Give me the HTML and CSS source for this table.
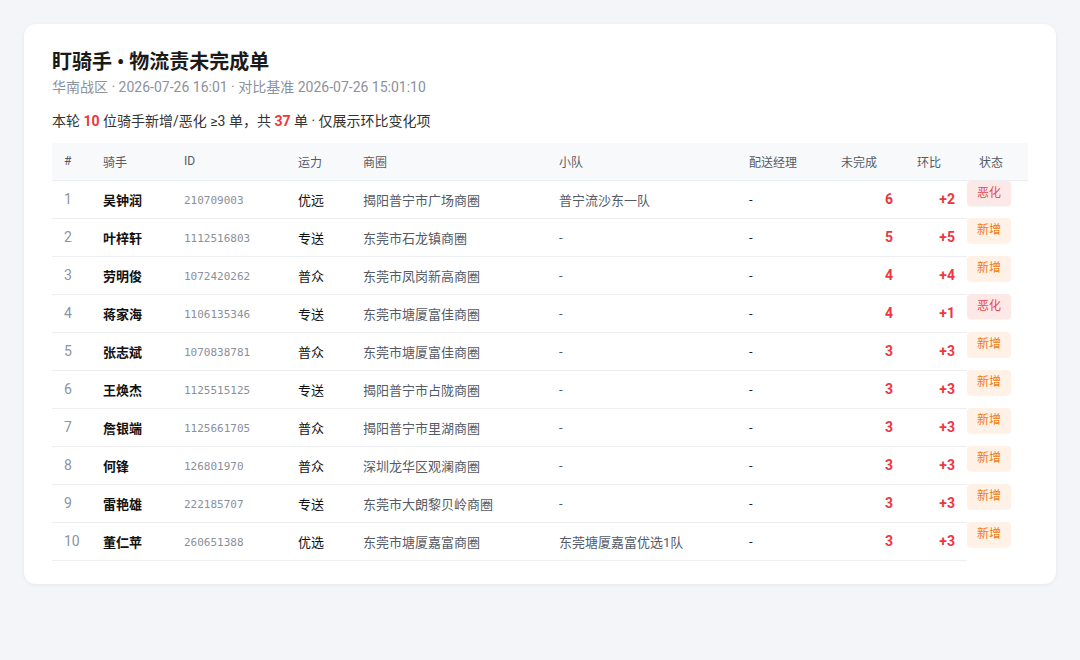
FILE: index.html
```html
<!DOCTYPE html>
<html lang="zh">
<head>
<meta charset="utf-8">
<link rel="stylesheet" href="styles.css">
</head>
<body>
<div class="card">
  <h1 class="title">盯骑手 • 物流责未完成单</h1>
  <div class="sub">华南战区 · 2026-07-26 16:01 · 对比基准 2026-07-26 15:01:10</div>
  <div class="summary">本轮 <b class="hot">10</b> 位骑手新增/恶化 ≥3 单，共 <b class="hot">37</b> 单 · 仅展示环比变化项</div>
  <table class="grid">
    <colgroup>
      <col class="c-no"><col class="c-name"><col class="c-id"><col class="c-cap"><col class="c-area"><col class="c-team"><col class="c-mgr"><col class="c-open"><col class="c-delta"><col class="c-st">
    </colgroup>
    <thead>
      <tr><th>#</th><th>骑手</th><th>ID</th><th>运力</th><th>商圈</th><th>小队</th><th>配送经理</th><th>未完成</th><th>环比</th><th>状态</th></tr>
    </thead>
    <tbody>
      <tr><td class="no">1</td><td class="name">吴钟润</td><td class="id">210709003</td><td class="cap">优远</td><td class="area">揭阳普宁市广场商圈</td><td class="team">普宁流沙东一队</td><td class="mgr">-</td><td class="num">6</td><td class="num">+2</td><td class="st"><span class="badge worse">恶化</span></td></tr>
      <tr><td class="no">2</td><td class="name">叶梓轩</td><td class="id">1112516803</td><td class="cap">专送</td><td class="area">东莞市石龙镇商圈</td><td class="team">-</td><td class="mgr">-</td><td class="num">5</td><td class="num">+5</td><td class="st"><span class="badge new">新增</span></td></tr>
      <tr><td class="no">3</td><td class="name">劳明俊</td><td class="id">1072420262</td><td class="cap">普众</td><td class="area">东莞市凤岗新高商圈</td><td class="team">-</td><td class="mgr">-</td><td class="num">4</td><td class="num">+4</td><td class="st"><span class="badge new">新增</span></td></tr>
      <tr><td class="no">4</td><td class="name">蒋家海</td><td class="id">1106135346</td><td class="cap">专送</td><td class="area">东莞市塘厦富佳商圈</td><td class="team">-</td><td class="mgr">-</td><td class="num">4</td><td class="num">+1</td><td class="st"><span class="badge worse">恶化</span></td></tr>
      <tr><td class="no">5</td><td class="name">张志斌</td><td class="id">1070838781</td><td class="cap">普众</td><td class="area">东莞市塘厦富佳商圈</td><td class="team">-</td><td class="mgr">-</td><td class="num">3</td><td class="num">+3</td><td class="st"><span class="badge new">新增</span></td></tr>
      <tr><td class="no">6</td><td class="name">王焕杰</td><td class="id">1125515125</td><td class="cap">专送</td><td class="area">揭阳普宁市占陇商圈</td><td class="team">-</td><td class="mgr">-</td><td class="num">3</td><td class="num">+3</td><td class="st"><span class="badge new">新增</span></td></tr>
      <tr><td class="no">7</td><td class="name">詹银端</td><td class="id">1125661705</td><td class="cap">普众</td><td class="area">揭阳普宁市里湖商圈</td><td class="team">-</td><td class="mgr">-</td><td class="num">3</td><td class="num">+3</td><td class="st"><span class="badge new">新增</span></td></tr>
      <tr><td class="no">8</td><td class="name">何锋</td><td class="id">126801970</td><td class="cap">普众</td><td class="area">深圳龙华区观澜商圈</td><td class="team">-</td><td class="mgr">-</td><td class="num">3</td><td class="num">+3</td><td class="st"><span class="badge new">新增</span></td></tr>
      <tr><td class="no">9</td><td class="name">雷艳雄</td><td class="id">222185707</td><td class="cap">专送</td><td class="area">东莞市大朗黎贝岭商圈</td><td class="team">-</td><td class="mgr">-</td><td class="num">3</td><td class="num">+3</td><td class="st"><span class="badge new">新增</span></td></tr>
      <tr><td class="no">10</td><td class="name">董仁苹</td><td class="id">260651388</td><td class="cap">优选</td><td class="area">东莞市塘厦嘉富商圈</td><td class="team">东莞塘厦嘉富优选1队</td><td class="mgr">-</td><td class="num">3</td><td class="num">+3</td><td class="st"><span class="badge new">新增</span></td></tr>
    </tbody>
  </table>
</div>
</body>
</html>
```

FILE: styles.css
```css
html, body {
  margin: 0;
  padding: 0;
}
body {
  background: #f4f5f8;
  font-family: "Roboto", "Noto Sans CJK SC", sans-serif;
  color: #333;
  padding: 24px;
}
.card {
  background: #fff;
  border-radius: 12px;
  box-shadow: 0 1px 4px rgba(20, 30, 60, 0.06);
  padding: 24px 28px 23px;
  width: 1032px;
  box-sizing: border-box;
}
.title {
  margin: 0;
  font-size: 20px;
  font-weight: 700;
  color: #1a1a1a;
  line-height: 28px;
}
.sub {
  font-size: 14px;
  color: #8c929c;
  line-height: 20px;
  margin-top: 1px;
}
.summary {
  font-size: 14px;
  color: #333;
  line-height: 20px;
  margin-top: 14px;
}
.hot {
  color: #f0353c;
  font-weight: 700;
}
.grid {
  margin-top: 12px;
  width: 976px;
  table-layout: fixed;
  border-collapse: collapse;
  font-size: 13px;
}
.c-no { width: 39px; }
.c-name { width: 81px; }
.c-id { width: 114px; }
.c-cap { width: 65px; }
.c-area { width: 196px; }
.c-team { width: 190px; }
.c-mgr { width: 92px; }
.c-open { width: 76px; }
.c-delta { width: 62px; }
.c-st { width: 61px; }
.grid th {
  background: #f8f9fb;
  color: #555b66;
  font-weight: 400;
  font-size: 12px;
  text-align: left;
  height: 37px;
  padding: 0 12px;
  border-bottom: 1px solid #eceef1;
  box-sizing: border-box;
}
.grid td {
  height: 38px;
  padding: 0 12px;
  border-bottom: 1px solid #eceef1;
  box-sizing: border-box;
  white-space: nowrap;
}
.grid td.no {
  color: #8a94a6;
  font-size: 14px;
}
.grid td.name {
  font-weight: 700;
  color: #111;
}
.grid td.id {
  font-family: "DejaVu Sans Mono", monospace;
  font-size: 11px;
  color: #8a909c;
  padding-top: 2px;
}
.grid td.cap {
  color: #111;
}
.grid td.area,
.grid td.team {
  color: #555b66;
}
.grid td.mgr {
  color: #222;
}
.grid td.num {
  text-align: right;
  color: #f0353c;
  font-weight: 700;
  font-size: 14px;
}
.grid td.st {
  padding: 0;
  border-bottom: none;
  vertical-align: top;
}
.badge {
  display: inline-block;
  width: 44px;
  height: 25px;
  line-height: 25px;
  text-align: center;
  font-size: 12px;
  border-radius: 4px;
  box-shadow: 0 1px 1px rgba(0, 0, 0, 0.04);
}
.badge.worse {
  background: #fde8e8;
  color: #e5484d;
}
.badge.new {
  background: #fff1e6;
  color: #f27a12;
}
```
